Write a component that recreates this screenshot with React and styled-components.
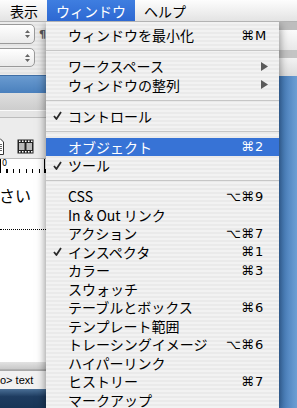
import React from 'react'
import styled, { createGlobalStyle } from 'styled-components'

const GlobalStyle = createGlobalStyle`
  html, body { margin: 0; padding: 0; }
  body {
    font-family: "Noto Sans CJK JP", "DejaVu Sans", sans-serif;
    background: #5a8dc4;
  }
`

const Screen = styled.div`
  width: 297px;
  height: 408px;
  overflow: hidden;
  display: flex;
  flex-direction: column;
`

const MenuBar = styled.div`
  height: 22px;
  flex: none;
  box-sizing: border-box;
  display: flex;
  padding-left: 1px;
  background: linear-gradient(#fdfdfd, #efefef 55%, #e3e3e3);
  border-bottom: 1px solid #b3b3b3;
  position: relative;
  z-index: 2;
`

const MenuTitle = styled.div`
  padding: 0 9px;
  display: flex;
  align-items: center;
  font-size: 14px;
  color: ${p => (p.$open ? '#fff' : '#000')};
  background: ${p => (p.$open ? 'linear-gradient(#3f7ee0, #2d68d2)' : 'transparent')};
`

const Desk = styled.div`
  flex: 1;
  display: flex;
  min-height: 0;
`

/* ---------- document window on the left ---------- */

const DocWindow = styled.div`
  width: 46px;
  flex: none;
  display: flex;
  flex-direction: column;
  overflow: hidden;
  background: #e6e6e6;
`

const Toolbar = styled.div`
  height: 53px;
  flex: none;
  box-sizing: border-box;
  padding-top: 2px;
  display: flex;
  flex-direction: column;
  gap: 4px;
  background: repeating-linear-gradient(#ececec 0 2px, #e4e4e4 2px 4px);
`

const SelectRow = styled.div`
  display: flex;
  align-items: center;
  gap: 4px;
`

const Select = styled.div`
  width: 45px;
  height: ${p => p.$h}px;
  margin-left: -10px;
  box-sizing: border-box;
  border: 1px solid #9a9a9a;
  border-radius: 5px;
  background: linear-gradient(#ffffff, #eaeaea);
  display: flex;
  justify-content: flex-end;
  align-items: center;
  padding-right: 4px;
`

const Pilcrow = styled.span`
  font-family: "DejaVu Sans", sans-serif;
  font-size: 11px;
  font-weight: bold;
  color: #555;
`

const BlueBand = styled.div`
  height: 18px;
  flex: none;
  background: linear-gradient(#6a9bd0, #4a80bd);
  border-top: 1px solid #3f6ea5;
  box-sizing: border-box;
`

const Panel = styled.div`
  height: ${p => p.$h}px;
  flex: none;
  box-sizing: border-box;
  background: ${p => p.$bg};
  border-bottom: 1px solid ${p => p.$line};
`

const IconRow = styled.div`
  height: 40px;
  flex: none;
  box-sizing: border-box;
  display: flex;
  align-items: flex-end;
  gap: 13px;
  padding-bottom: 3px;
  margin-left: -8px;
  background: #ececec;
`

const Ruler = styled.div`
  height: 15px;
  flex: none;
  display: flex;
  gap: 37px;
  background:
    repeating-linear-gradient(90deg, #000 0 1px, transparent 1px 6.5px) left bottom / 100% 4px no-repeat,
    #fff;
  border-top: 1px solid #bbb;
  box-sizing: border-box;
`

const RulerNum = styled.span`
  border-left: 1px solid #000;
  padding-left: 1px;
  font-family: "DejaVu Sans", sans-serif;
  font-size: 8px;
  line-height: 9px;
`

const Content = styled.div`
  flex: 1;
  background: #fff;
  padding-top: 10px;
`

const BodyText = styled.div`
  font-size: 16px;
  line-height: 24px;
  margin-left: -1px;
  white-space: nowrap;
`

const Dotted = styled.div`
  margin-top: 22px;
  border-top: 1px dotted #000;
`

const StatusBar = styled.div`
  height: 19px;
  flex: none;
  box-sizing: border-box;
  display: flex;
  align-items: center;
  background: #f1f1f1;
  border-top: 1px solid #a8a8a8;
  font-family: "Liberation Sans", sans-serif;
  font-size: 11px;
  white-space: nowrap;
`

const Dock = styled.div`
  height: 19px;
  flex: none;
  background: linear-gradient(#4a6f96, #1e3c60 40%, #183556);
`

/* ---------- the pulled down menu ---------- */

const DropMenu = styled.div`
  width: 233px;
  flex: none;
  padding-top: 4px;
  position: relative;
  z-index: 1;
  background: repeating-linear-gradient(#f2f2f2 0 2px, #eaeaea 2px 4px);
  box-shadow: 0 3px 9px rgba(0, 0, 0, 0.5);
`

const Item = styled.div`
  height: 18.5px;
  display: flex;
  align-items: center;
  padding-right: 11px;
  font-size: 14px;
  white-space: nowrap;
  color: ${p => (p.$active ? '#fff' : '#000')};
  background: ${p => (p.$active ? '#3773d6' : 'transparent')};
`

const CheckCell = styled.span`
  width: 22px;
  flex: none;
  box-sizing: border-box;
  padding-left: 7px;
  display: flex;
  align-items: center;
`

const Label = styled.span`
  flex: 1;
`

const Shortcut = styled.span`
  display: flex;
  font-family: "DejaVu Sans", sans-serif;
  font-size: 13px;
`

const Mods = styled.span`
  padding-right: 1px;
`

const Key = styled.span`
  width: 13px;
`

const Separator = styled.div`
  height: 12.5px;
  display: flex;
  align-items: center;
  &::after {
    content: '';
    flex: 1;
    height: 1px;
    background: #c6c6c6;
  }
`

/* ---------- right side ---------- */

const RightSide = styled.div`
  flex: 1;
  display: flex;
  flex-direction: column;
`

const WindowEdge = styled.div`
  height: 54px;
  flex: none;
  background: linear-gradient(
    #bdbdbd 0 8px,
    #fbfbfb 8px,
    #e8e8e8 28px,
    #c4c4c4 28px 36px,
    #f3f3f3 36px,
    #dcdcdc 54px
  );
`

const Desktop = styled.div`
  flex: 1;
  background: linear-gradient(90deg, #3f76b5, #6c9ed3);
`

const Check = () => (
  <svg width="9" height="9" viewBox="0 0 9 9">
    <path d="M1 5 L3.4 8 L8 1" fill="none" stroke="#2a2a2a" strokeWidth="1.8" strokeLinejoin="round" />
  </svg>
)

const SubArrow = () => (
  <svg width="7" height="9" viewBox="0 0 7 9">
    <path d="M0 0 L7 4.5 L0 9 Z" fill="#5a5a5a" />
  </svg>
)

const Stepper = () => (
  <svg width="5" height="10" viewBox="0 0 5 10">
    <path d="M0 4 L2.5 1 L5 4 Z M0 6 L2.5 9 L5 6 Z" fill="#666" />
  </svg>
)

const FilmStrip = () => (
  <svg width="17" height="17" viewBox="0 0 17 17">
    <rect x="0.5" y="1.5" width="16" height="14" fill="#222" />
    {[2, 5, 8, 11, 14].map(x => (
      <React.Fragment key={x}>
        <rect x={x} y="2.5" width="1.5" height="1.5" fill="#fff" />
        <rect x={x} y="13" width="1.5" height="1.5" fill="#fff" />
      </React.Fragment>
    ))}
    <rect x="2" y="5" width="5.5" height="7" fill="#bbb" />
    <rect x="9.5" y="5" width="5.5" height="7" fill="#bbb" />
  </svg>
)

const DocIcon = () => (
  <svg width="12" height="17" viewBox="0 0 12 17">
    <path d="M0.5 0.5 H8 L11.5 4 V16.5 H0.5 Z" fill="#fff" stroke="#333" />
    {[6, 8, 10, 12].map(y => (
      <rect key={y} x="2" y={y} width="8" height="1" fill="#666" />
    ))}
  </svg>
)

const items = [
  { label: 'ウィンドウを最小化', key: 'M', mods: '⌘' },
  'sep',
  { label: 'ワークスペース', sub: true },
  { label: 'ウィンドウの整列', sub: true },
  'sep',
  { label: 'コントロール', checked: true },
  'sep',
  { label: 'オブジェクト', key: '2', mods: '⌘', active: true },
  { label: 'ツール', checked: true },
  'sep',
  { label: 'CSS', key: '9', mods: '⌥⌘' },
  { label: 'In & Out リンク' },
  { label: 'アクション', key: '7', mods: '⌥⌘' },
  { label: 'インスペクタ', key: '1', mods: '⌘', checked: true },
  { label: 'カラー', key: '3', mods: '⌘' },
  { label: 'スウォッチ' },
  { label: 'テーブルとボックス', key: '6', mods: '⌘' },
  { label: 'テンプレート範囲' },
  { label: 'トレーシングイメージ', key: '6', mods: '⌥⌘' },
  { label: 'ハイパーリンク' },
  { label: 'ヒストリー', key: '7', mods: '⌘' },
  { label: 'マークアップ' },
]

const App = () => {
  return (
    <Screen>
      <GlobalStyle />
      <MenuBar>
        <MenuTitle>表示</MenuTitle>
        <MenuTitle $open>ウィンドウ</MenuTitle>
        <MenuTitle>ヘルプ</MenuTitle>
      </MenuBar>

      <Desk>
        <DocWindow>
          <Toolbar>
            <SelectRow>
              <Select $h={20}><Stepper /></Select>
              <Pilcrow>¶</Pilcrow>
            </SelectRow>
            <SelectRow>
              <Select $h={19}><Stepper /></Select>
            </SelectRow>
          </Toolbar>
          <BlueBand />
          <Panel $h={18} $bg="linear-gradient(#dedede, #cdcdcd)" $line="#fafafa" />
          <Panel $h={7} $bg="#e4e4e4" $line="#bcbcbc" />
          <IconRow>
            <DocIcon />
            <FilmStrip />
          </IconRow>
          <Ruler>
            <RulerNum>0</RulerNum>
            <RulerNum>3</RulerNum>
          </Ruler>
          <Content>
            <BodyText>さい</BodyText>
            <Dotted />
          </Content>
          <Panel $h={8} $bg="linear-gradient(#e2e2e2, #c9c9c9)" $line="#b0b0b0" />
          <StatusBar>o&gt; text</StatusBar>
          <Dock />
        </DocWindow>

        <DropMenu>
          {items.map((it, i) =>
            it === 'sep' ? (
              <Separator key={i} />
            ) : (
              <Item key={i} $active={it.active}>
                <CheckCell>{it.checked && <Check />}</CheckCell>
                <Label>{it.label}</Label>
                {it.sub && <SubArrow />}
                {it.key && (
                  <Shortcut>
                    <Mods>{it.mods}</Mods>
                    <Key>{it.key}</Key>
                  </Shortcut>
                )}
              </Item>
            )
          )}
        </DropMenu>

        <RightSide>
          <WindowEdge />
          <Desktop />
        </RightSide>
      </Desk>
    </Screen>
  )
}

export default App
